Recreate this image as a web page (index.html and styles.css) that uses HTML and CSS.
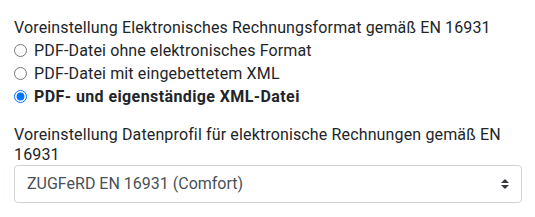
FILE: index.html
```html
<!DOCTYPE html>
<html lang="de">
<head>
    <meta charset="UTF-8">
    <meta name="viewport" content="width=device-width, initial-scale=1.0">
    <title>Rechnungsformat</title>
    <link rel="stylesheet" href="styles.css">
</head>
<body>
    <div class="settings">
        <div class="form-group">
            <label class="group-label">Voreinstellung Elektronisches Rechnungsformat gemäß EN 16931</label>
            <div class="radio-row">
                <label><input type="radio" name="format"> PDF-Datei ohne elektronisches Format</label>
            </div>
            <div class="radio-row">
                <label><input type="radio" name="format"> PDF-Datei mit eingebettetem XML</label>
            </div>
            <div class="radio-row">
                <label><input type="radio" name="format" checked> <b>PDF- und eigenständige XML-Datei</b></label>
            </div>
        </div>
        <div class="form-group">
            <label class="group-label" for="profil">Voreinstellung Datenprofil für elektronische Rechnungen gemäß EN 16931</label>
            <div class="select-wrap">
                <select id="profil" class="custom-select">
                    <option>ZUGFeRD EN 16931 (Comfort)</option>
                    <option>ZUGFeRD Basic</option>
                    <option>XRechnung</option>
                </select>
                <svg class="select-arrow" width="8" height="10" viewBox="0 0 4 5">
                    <path fill="#343a40" d="M2 0L0 2h4zm0 5L0 3h4z"/>
                </svg>
            </div>
        </div>
    </div>
</body>
</html>
```

FILE: styles.css
```css
body {
    margin: 0;
    font-family: "Segoe UI", Roboto, "Liberation Sans", sans-serif;
    font-size: 16px;
    letter-spacing: 0.14px;
    color: #212529;
    background: #fff;
}
.settings {
    padding: 18px 13px 0 14px;
}
.form-group {
    margin-bottom: 18px;
}
.group-label {
    display: block;
    line-height: 20px;
}
.radio-row {
    line-height: 23px;
    padding-top: 1px;
    margin-bottom: -1px;
}
.radio-row input {
    width: 13px;
    height: 13px;
    margin: 0 3px 0 0;
    vertical-align: -1px;
}
.radio-row b {
    font-weight: 700;
    letter-spacing: 0.4px;
}
.select-wrap {
    position: relative;
}
.custom-select {
    display: block;
    width: 100%;
    height: 38px;
    padding: 6px 28px 6px 12px;
    font-family: inherit;
    font-size: 16px;
    letter-spacing: 0;
    line-height: 24px;
    color: #495057;
    background: #fff;
    border: 1px solid #ced4da;
    border-radius: 4px;
    appearance: none;
    -webkit-appearance: none;
}
.select-arrow {
    position: absolute;
    right: 13px;
    top: 14px;
    pointer-events: none;
}
```
